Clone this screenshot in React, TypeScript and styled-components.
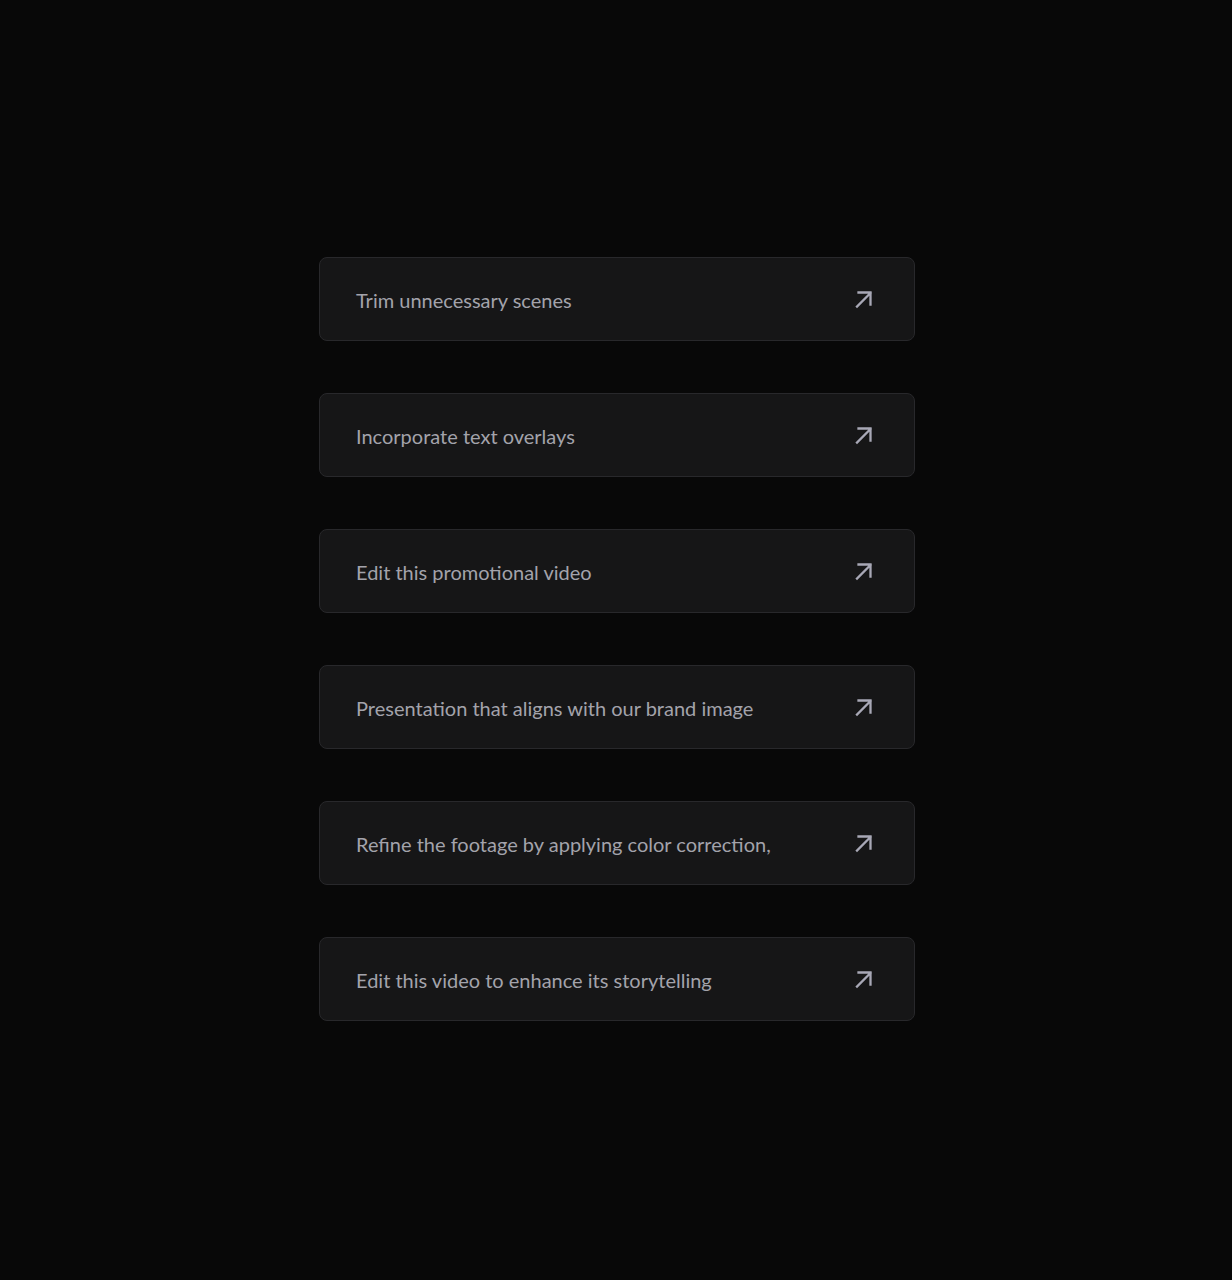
import React from "react";
import styled, { createGlobalStyle } from "styled-components";

const GlobalStyle = createGlobalStyle`
  html, body {
    margin: 0;
    padding: 0;
    background: #080808;
  }
  body {
    font-family: Lato, "Liberation Sans", sans-serif;
    -webkit-font-smoothing: antialiased;
  }
`;

const Page = styled.div`
  min-height: 1280px;
  box-sizing: border-box;
  padding: 257px 0 0 319px;
  background: #080808;
`;

const List = styled.div`
  width: 596px;
  display: flex;
  flex-direction: column;
  gap: 52px;
`;

const Card = styled.button`
  box-sizing: border-box;
  height: 84px;
  width: 100%;
  display: flex;
  align-items: center;
  justify-content: space-between;
  padding: 0 40px 0 36px;
  background: #161617;
  border: 1px solid #28282b;
  border-radius: 8px;
  cursor: pointer;
  text-align: left;
  font-family: inherit;

  &:hover {
    background: #1b1b1d;
  }
`;

const Label = styled.span`
  font-size: 20px;
  line-height: 24px;
  color: #a3a3ab;
  padding-top: 2px;
`;

const ArrowIcon = () => (
  <svg width="20" height="20" viewBox="0 0 20 20" fill="none">
    <path
      d="M3 17.5L16.5 4M4.5 3.5H16.5V15.5"
      stroke="#a8a8b6"
      strokeWidth="2.3"
      strokeLinecap="square"
      strokeLinejoin="miter"
    />
  </svg>
);

const prompts = [
  "Trim unnecessary scenes",
  "Incorporate text overlays",
  "Edit this promotional video",
  "Presentation that aligns with our brand image",
  "Refine the footage by applying color correction,",
  "Edit this video to enhance its storytelling",
];

export default function App() {
  return (
    <>
      <GlobalStyle />
      <Page>
        <List>
          {prompts.map((p) => (
            <Card key={p}>
              <Label>{p}</Label>
              <ArrowIcon />
            </Card>
          ))}
        </List>
      </Page>
    </>
  );
}
